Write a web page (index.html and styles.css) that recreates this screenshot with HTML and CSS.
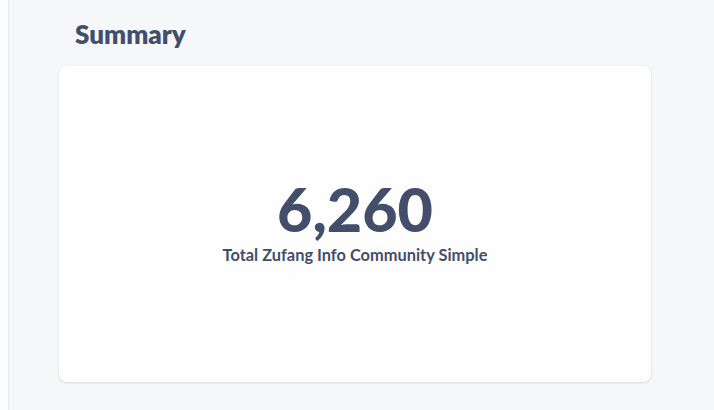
FILE: index.html
```html
<!DOCTYPE html>
<html>
<head>
<meta charset="utf-8">
<link rel="stylesheet" href="styles.css">
</head>
<body>
<div class="layout">
  <div class="rail"></div>
  <main class="main">
    <h2 class="title">Summary</h2>
    <section class="card">
      <div class="scalar">
        <div class="value">6,260</div>
        <div class="label">Total Zufang Info Community Simple</div>
      </div>
    </section>
  </main>
</div>
</body>
</html>
```
FILE: styles.css
```css
html, body {
  margin: 0;
  padding: 0;
  height: 100%;
  font-family: Lato, "Open Sans", sans-serif;
  color: #434e6a;
}
.layout {
  display: flex;
  height: 410px;
  overflow: hidden;
}
.rail {
  width: 8px;
  flex: none;
  background: #fdfdfd;
  border-right: 1px solid #e8eaee;
}
.main {
  flex: 1;
  background: #f6f7f9;
  padding: 17px 0 0 50px;
  box-sizing: border-box;
}
.title {
  margin: 0 0 15px 16px;
  font-size: 26px;
  line-height: 34px;
  font-weight: 800;
  color: #434e6a;
}
.card {
  width: 592px;
  height: 316px;
  box-sizing: border-box;
  padding-bottom: 4px;
  background: #fefefe;
  border-radius: 8px;
  box-shadow: 0 1px 3px rgba(0, 0, 0, 0.13);
  display: flex;
  align-items: center;
  justify-content: center;
}
.scalar {
  display: flex;
  flex-direction: column;
  align-items: center;
}
.value {
  font-size: 61px;
  line-height: 60px;
  font-weight: 900;
  letter-spacing: 0;
}
.label {
  font-size: 16.4px;
  line-height: 20px;
  font-weight: 700;
  margin-top: 6px;
}
```
